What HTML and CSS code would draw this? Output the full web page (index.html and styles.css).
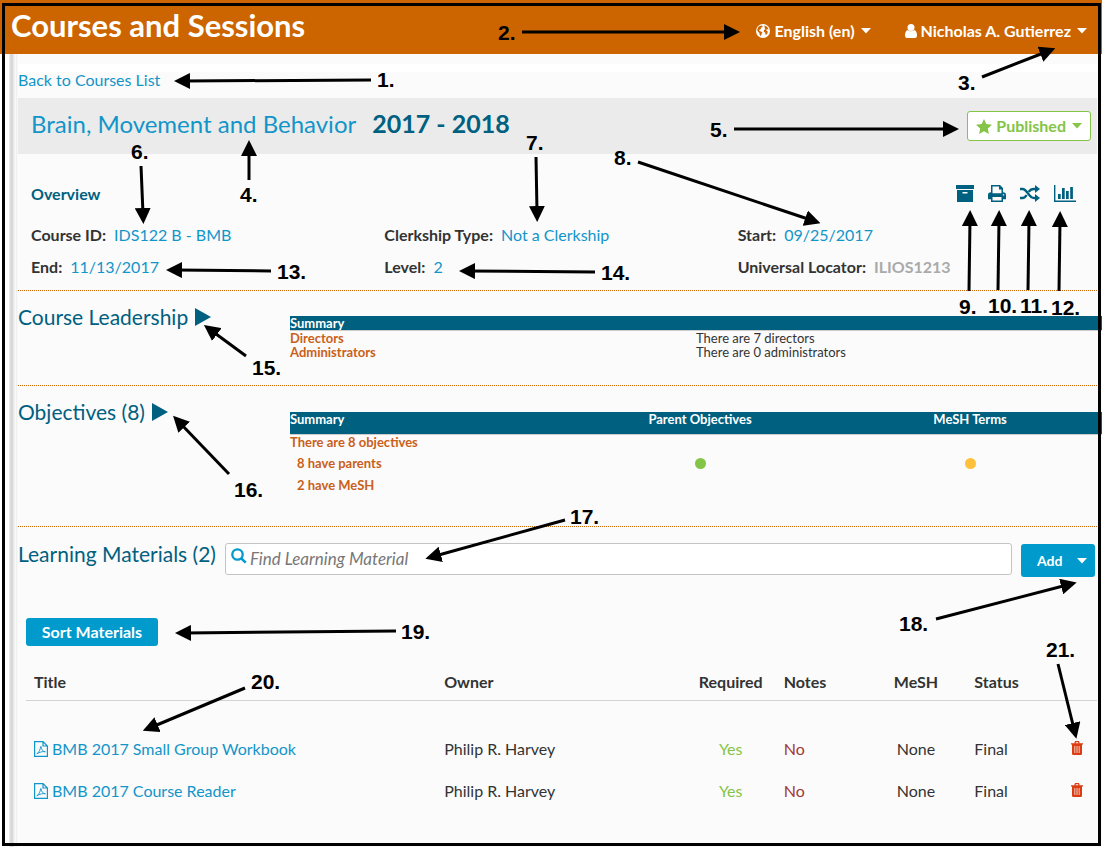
FILE: index.html
```html
<!DOCTYPE html>
<html lang="en">
<head>
<meta charset="utf-8">
<title>Courses and Sessions</title>
<link rel="stylesheet" href="styles.css">
</head>
<body>
<svg class="sprite" aria-hidden="true">
  <symbol id="caret" viewBox="0 0 10 6"><path d="M0 0h10L5 5.500z"/></symbol>
  <symbol id="play" viewBox="0 0 16 18"><path d="M0 0l16 9L0 18z"/></symbol>
  <symbol id="pdf" viewBox="0 0 14 16"><path d="M.6.600h8.400l4.400 4.400v10.400H.600zM9 .600V5h4.400" fill="none" stroke="currentColor" stroke-width="1.200"/><path d="M2.800 12.800c1.800-.8 3.800-4.600 3.700-6.800 0-.7 .7-.7.700 0-.1 2.600 2 4.600 4.200 4.800-2.600-.6-5.600.2-8.600 2z" fill="none" stroke="currentColor" stroke-width=".9"/></symbol>
  <symbol id="trash" viewBox="0 0 12 14"><path d="M3.800 2.300L4.500.7h3l.7 1.600M0 2.800h12" fill="none" stroke="currentColor" stroke-width="1.200"/><path d="M1 3h10v9.500q0 1.500-1.300 1.500H2.300Q1 14 1 12.500z"/><path d="M3.800 5v7M6 5v7M8.200 5v7" stroke="#fbfbfb" stroke-width="1" opacity=".75"/></symbol>
  <marker id="head" viewBox="0 0 16 16" refX="6" refY="8" markerWidth="16" markerHeight="16" markerUnits="userSpaceOnUse" orient="auto"><path d="M0 0l16 8-16 8z" fill="#000"/></marker>
</svg>

<header class="topbar">
  <h1>Courses and Sessions</h1>
  <nav class="user-nav">
    <button type="button"><svg width="14" height="14" viewBox="0 0 14 14"><circle cx="7" cy="7" r="7"/><path d="M2.600 2.600l2.800-1.200 1.400.6-.6 1.200-1.400.6.2 1.200-1.600.8-.2 1.200 1.800.4 1.400 1.200-.8 1.400-.8 2-1-.8-.4-2.200-1.600-1.400-.6-1.800zM8.400 1.600l2.800 1.200 1.400 2.800-1-.4-1.200.4.2 1.200 1.200.8-.4 2-1.200 1.200-.8-.4-.2-1.800-1.400-.8.200-1.800 1.400-.8-.6-1z" class="land"/></svg>English (en)<svg class="caret" width="10" height="6"><use href="#caret"/></svg></button>
    <button type="button"><svg width="12" height="14" viewBox="0 0 12 14"><circle cx="6" cy="3.500" r="3.500"/><path d="M2.600 6q3.400 2.600 6.800 0Q12 7 12 11.500q0 2.500-2 2.500H2q-2 0-2-2.500Q0 7 2.600 6z"/></svg>Nicholas A. Gutierrez<svg class="caret" width="10" height="6"><use href="#caret"/></svg></button>
  </nav>
</header>

<div class="shell">
  <main class="course">
    <div class="back"><a href="#courses">Back to Courses List</a></div>

    <div class="title-bar">
      <h2><a href="#title">Brain, Movement and Behavior</a><span>2017 - 2018</span></h2>
      <button type="button" class="publish"><svg width="16" height="15" viewBox="0 0 16 15"><path d="M8 0l2.300 5 5.700.7-4.200 3.800 1.100 5.500L8 12.300 3.100 15l1.100-5.500L0 5.700 5.700 5z"/></svg>Published<svg class="caret" width="10" height="6"><use href="#caret"/></svg></button>
    </div>

    <section class="overview">
      <div class="overview-head">
        <h3>Overview</h3>
        <div class="tools">
          <a href="#materials" aria-label="Materials"><svg width="18" height="17" viewBox="0 0 18 17"><path d="M0 0h18v4H0z"/><path fill-rule="evenodd" d="M1 5h16v12H1zM6.500 7v1.500h5V7z"/></svg></a>
          <a href="#print" aria-label="Print"><svg width="18" height="17" viewBox="0 0 18 17"><path fill-rule="evenodd" d="M3 0h9l3 3v4.200q3 0 3 2.600v4.400h-3V17H3v-2.800H0V9.800q0-2.600 3-2.600zM4.500 1.500v6.700h9V4.500H11v-3zM4.500 12v3.500h9V12zM14.800 9.200v1.400h1.400V9.200z"/></svg></a>
          <a href="#rollover" aria-label="Rollover"><svg width="20" height="17" viewBox="0 0 20 17"><path d="M0 4h2.500C7.500 4 8.500 13 14 13h2M0 13h2.500c2 0 3.200-1.300 4.100-3M8.700 6.900C9.800 5.300 11.500 4 14 4h2" fill="none" stroke="currentColor" stroke-width="2.400"/><path d="M15 0l5 4-5 4zM15 9l5 4-5 4z"/></svg></a>
          <a href="#chart" aria-label="Visualizations"><svg width="22" height="17" viewBox="0 0 22 17"><path d="M.7 0v16.200H22" fill="none" stroke="currentColor" stroke-width="1.400"/><path d="M4 9h2.700v5H4zM8 3h2.700v11H8zM12 6h2.700v8H12zM16.200 2h2.700v12h-2.700z"/></svg></a>
        </div>
      </div>
      <dl class="facts">
        <div><dt>Course ID:</dt><dd><a href="#id">IDS122 B - BMB</a></dd></div>
        <div><dt>Clerkship Type:</dt><dd><a href="#type">Not a Clerkship</a></dd></div>
        <div><dt>Start:</dt><dd><a href="#start">09/25/2017</a></dd></div>
        <div><dt>End:</dt><dd><a href="#end">11/13/2017</a></dd></div>
        <div><dt>Level:</dt><dd><a href="#level">2</a></dd></div>
        <div><dt>Universal Locator:</dt><dd class="locator">ILIOS1213</dd></div>
      </dl>
    </section>

    <section class="panel leadership">
      <h3>Course Leadership<svg width="16" height="18"><use href="#play"/></svg></h3>
      <table class="summary">
        <thead><tr><th>Summary</th><th></th></tr></thead>
        <tbody>
          <tr><th scope="row">Directors</th><td>There are 7 directors</td></tr>
          <tr><th scope="row">Administrators</th><td>There are 0 administrators</td></tr>
        </tbody>
      </table>
    </section>

    <section class="panel objectives">
      <h3>Objectives (8)<svg width="16" height="18"><use href="#play"/></svg></h3>
      <table class="summary roomy">
        <thead><tr><th class="c-sum">Summary</th><th class="c-par">Parent Objectives</th><th>MeSH Terms</th></tr></thead>
        <tbody>
          <tr><th scope="row">There are 8 objectives</th><td></td><td></td></tr>
          <tr><th scope="row" class="sub">8 have parents</th><td><i class="dot green"></i></td><td><i class="dot amber"></i></td></tr>
          <tr><th scope="row" class="sub">2 have MeSH</th><td></td><td></td></tr>
        </tbody>
      </table>
    </section>

    <section class="materials">
      <div class="materials-head">
        <h3><label for="find">Learning Materials (2)</label></h3>
        <div class="search">
          <svg width="16" height="16" viewBox="0 0 16 16"><circle cx="6.500" cy="6.500" r="5.200" fill="none" stroke="currentColor" stroke-width="2.300"/><path d="M10.300 10.300l4.400 4.400" stroke="currentColor" stroke-width="2.600"/></svg>
          <input id="find" type="text" placeholder="Find Learning Material">
        </div>
        <button type="button" class="add">Add<svg width="10" height="6"><use href="#caret"/></svg></button>
      </div>
      <button type="button" class="sort">Sort Materials</button>
      <table class="list">
        <thead><tr><th class="w-title">Title</th><th class="w-owner">Owner</th><th class="w-req mid">Required</th><th class="w-notes">Notes</th><th class="w-mesh mid">MeSH</th><th class="w-status">Status</th><th></th></tr></thead>
        <tbody>
          <tr><td><a href="#m1"><svg width="14" height="16"><use href="#pdf"/></svg>BMB 2017 Small Group Workbook</a></td><td>Philip R. Harvey</td><td class="mid yes">Yes</td><td class="no">No</td><td class="mid">None</td><td>Final</td><td class="mid"><button type="button" class="del" aria-label="Remove"><svg width="12" height="14"><use href="#trash"/></svg></button></td></tr>
          <tr><td><a href="#m2"><svg width="14" height="16"><use href="#pdf"/></svg>BMB 2017 Course Reader</a></td><td>Philip R. Harvey</td><td class="mid yes">Yes</td><td class="no">No</td><td class="mid">None</td><td>Final</td><td class="mid"><button type="button" class="del" aria-label="Remove"><svg width="12" height="14"><use href="#trash"/></svg></button></td></tr>
        </tbody>
      </table>
    </section>
  </main>
</div>

<div class="frame"></div>
<svg class="callouts" width="1102" height="847" viewBox="0 0 1102 847">
  <g class="arrows">
    <path d="M371 80L184 81"/><path d="M522 32H730"/><path d="M982 77L1046 52"/><path d="M249 180V150"/><path d="M734 129H949"/>
    <path d="M141 166L143 214"/><path d="M536 157L537 212"/><path d="M638 162L811 220"/><path d="M969 291L970 220"/><path d="M998 290L999 220"/>
    <path d="M1028 290L1029 220"/><path d="M1059 291L1060 221"/><path d="M271 271L176 270"/><path d="M595 272L469 271"/><path d="M246 356L212 331"/>
    <path d="M229 474L180 423"/><path d="M565 520L435 556"/><path d="M936 619L1067 585"/><path d="M396 631L185 633"/><path d="M245 688L152 727"/><path d="M1058 664L1074 729"/>
  </g>
  <g class="numbers">
    <text x="377" y="87">1.</text><text x="498" y="40">2.</text><text x="958" y="90">3.</text><text x="240" y="202">4.</text><text x="710" y="137">5.</text>
    <text x="131" y="159">6.</text><text x="526" y="150">7.</text><text x="614" y="165">8.</text><text x="959" y="314">9.</text><text x="988" y="313">10.</text>
    <text x="1020" y="313">11.</text><text x="1051" y="315">12.</text><text x="277" y="279">13.</text><text x="601" y="280">14.</text><text x="252" y="375">15.</text>
    <text x="234" y="497">16.</text><text x="570" y="524">17.</text><text x="899" y="631">18.</text><text x="401" y="639">19.</text><text x="251" y="689">20.</text><text x="1046" y="657">21.</text>
  </g>
</svg>
</body>
</html>
```
FILE: styles.css
```css
* { box-sizing: border-box; }
body { margin: 0; min-height: 100vh; position: relative; display: flex; flex-direction: column; background: #fbfbfb; color: #333; font: 16px/24px "Lato", "Open Sans", sans-serif; }
h1, h2, h3, dl, dd { margin: 0; font-weight: normal; }
svg { fill: currentColor; flex: none; }
a { color: #1295c9; text-decoration: none; }
button { font: inherit; border: 0; background: none; padding: 0; color: inherit; cursor: pointer; }
table { border-collapse: collapse; table-layout: fixed; width: 100%; }
th { text-align: left; }
.sprite { position: absolute; width: 0; height: 0; }

.topbar { display: flex; justify-content: space-between; height: 54px; padding: 6px 15px 0 11px; background: #cc6500; color: #fff; }
.topbar h1 { font-size: 31px; line-height: 38px; font-weight: bold; }
.user-nav { display: flex; gap: 34px; height: 50px; }
.user-nav button { display: flex; align-items: center; gap: 4px; font-weight: bold; }
.caret { margin-left: 2px; }
.land { fill: #cc6500; }

.shell { flex: 1; display: flex; padding: 0 5px 4px 9px; background: linear-gradient(90deg, #fff 9px, #ececec 9px, #d2d2d2 12px, #f0f0f0 14px, #fbfbfb 16px, #ececec 16px, #fbfbfb 18px); }
.course { flex: 1; min-width: 0; padding: 10px 0 0 9px; }
.back { border-top: 8px solid #fff; height: 34px; line-height: 16px; }
.title-bar { display: flex; justify-content: space-between; align-items: center; height: 56px; padding: 0 6px 0 13px; background: #ebebeb; }
.title-bar h2 { font-size: 24px; line-height: 32px; padding-bottom: 6px; }
.title-bar span { margin-left: 16px; color: #00607f; font-size: 25px; font-weight: bold; }
.publish { display: flex; align-items: center; gap: 4px; height: 30px; padding: 0 8px; border: 1px solid #84c446; border-radius: 3px; background: #fff; color: #84c446; font-weight: bold; }

.overview { padding: 28px 6px 7px 13px; border-bottom: 1px dotted #cc6500; }
.overview-head { display: flex; justify-content: space-between; align-items: center; color: #00607f; }
.overview-head h3 { font-size: 16px; font-weight: bold; }
.tools { display: flex; gap: 14px; padding: 0 15px 2px 0; }
.tools a { display: flex; color: #00607f; }
.facts { display: grid; grid-template-columns: repeat(3, 1fr); padding-top: 13px; line-height: 32px; }
.facts div { display: flex; gap: 8px; }
.facts dt, .locator { font-weight: bold; }
.locator { color: #aaa; }

.panel { position: relative; display: grid; grid-template-columns: 272px 1fr; margin-right: -5px; }
.panel::after { content: ""; position: absolute; left: 0; right: 5px; bottom: 0; border-bottom: 1px dotted #cc6500; }
.panel h3, .materials h3 { font-size: 21px; line-height: 26px; color: #00607f; }
.panel h3 { display: flex; gap: 7px; align-items: center; height: 26px; margin-top: 13px; }
.leadership { min-height: 95px; }
.objectives { min-height: 141px; }
.summary { align-self: start; margin-top: 25px; font-size: 13px; line-height: 14px; }
.summary th, .summary td { padding: 0; }
.summary thead { background: #00607f; color: #fff; border-bottom: 1px solid #ccc; }
.summary tbody th { color: #c9601a; }
.roomy { margin-top: 26px; }
.roomy th, .roomy td { height: 22px; vertical-align: top; }
.roomy td, .roomy th + th { text-align: center; }
.roomy .sub { padding-left: 7px; }
.c-sum { width: 33.5%; }
.c-par { width: 34%; }
.dot { display: block; width: 11px; height: 11px; margin: 2px auto 0; border-radius: 50%; }
.green { background: #84c446; }
.amber { background: #ffc13b; }

.materials-head { display: flex; align-items: flex-start; padding: 16px 2px 0 0; gap: 9px; }
.materials h3 { line-height: 22px; }
.search { flex: 1; position: relative; }
.search input { display: block; width: 100%; height: 32px; padding: 0 24px 2px; border: 1px solid #c4c4c4; border-radius: 3px; background: #fff; font: inherit; font-size: 17px; font-style: italic; }
.search input::placeholder { color: #777; opacity: 1; }
.search svg { position: absolute; left: 6px; top: 5px; color: #009acd; }
.add { display: flex; align-items: center; justify-content: space-between; width: 74px; height: 33px; margin-top: 1px; padding: 0 8px 0 16px; border-radius: 3px; background: #009acd; color: #fff; font-size: 14px; font-weight: bold; }
.sort { display: block; width: 132px; height: 28px; margin: 41px 0 0 8px; border-radius: 3px; background: #009acd; color: #fff; font-weight: bold; }
.list { width: calc(100% - 8px); margin: 17px 0 0 8px; }
.list th, .list td { padding: 9px 8px; }
.list thead th { border-bottom: 1px solid #d2d2d2; padding: 7px 8px 6px; }
.list tbody::before { content: ""; display: block; height: 27px; }
.list a { display: flex; align-items: center; gap: 4px; }
.list .mid { text-align: center; }
.w-title { width: 38.3%; }
.w-owner { width: 23.3%; }
.w-req, .w-notes, .w-status { width: 8.4%; }
.w-mesh { width: 9.4%; }
.yes { color: #84c446; }
.no { color: #a33a35; }
.del { display: block; margin: 0 auto; color: #dc3c11; }

.frame { position: absolute; inset: 3px 1px 1px 2px; border: 3px solid #000; pointer-events: none; }
.callouts { position: absolute; left: 0; top: 0; pointer-events: none; }
.arrows path { stroke: #000; stroke-width: 3; marker-end: url(#head); }
.numbers { fill: #000; font: bold 21px "Liberation Sans", sans-serif; }
```
